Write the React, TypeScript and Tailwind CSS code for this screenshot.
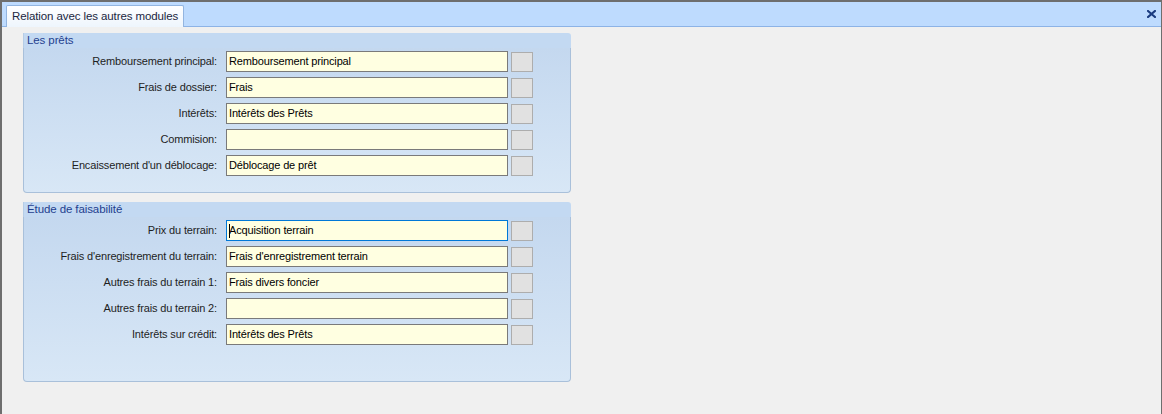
import React from "react";

const font = { fontFamily: '"Liberation Sans", Arial, sans-serif' };

type Row = { label: string; value: string; focused?: boolean };

const prets: Row[] = [
  { label: "Remboursement principal:", value: "Remboursement principal" },
  { label: "Frais de dossier:", value: "Frais" },
  { label: "Intérêts:", value: "Intérêts des Prêts" },
  { label: "Commision:", value: "" },
  { label: "Encaissement d'un déblocage:", value: "Déblocage de prêt" },
];

const etude: Row[] = [
  { label: "Prix du terrain:", value: "Acquisition terrain", focused: true },
  { label: "Frais d'enregistrement du terrain:", value: "Frais d'enregistrement terrain" },
  { label: "Autres frais du terrain 1:", value: "Frais divers foncier" },
  { label: "Autres frais du terrain 2:", value: "" },
  { label: "Intérêts sur crédit:", value: "Intérêts des Prêts" },
];

function FieldRow({ row }: { row: Row }) {
  return (
    <div className="flex h-[26px] items-center pt-[1px]">
      <div className="w-[193px] shrink-0 text-right text-[11px] tracking-[-0.15px] text-[#1e1e1e] leading-none">
        {row.label}
      </div>
      <div
        className={
          "ml-[9px] flex h-[21px] w-[282px] items-center bg-[#ffffe1] pl-[2px] text-[11px] tracking-[-0.15px] text-black leading-none " +
          (row.focused ? "border border-[#0078d7]" : "border border-[#7a7a7a]")
        }
      >
        {row.focused && <span className="mr-[-1px] inline-block h-[14px] w-px bg-black" />}
        {row.value}
      </div>
      <div className="ml-[3px] h-[20px] w-[22px] border border-[#adadad] bg-[#e1e1e1]" />
    </div>
  );
}

function Group({ title, rows, bottom }: { title: string; rows: Row[]; bottom: string }) {
  return (
    <div className="w-[548px]">
      <div className="h-[15px] rounded-tr-[3px] border-l border-[#b6cde6] bg-[#c3d9f2] pl-[3px] text-[11.5px] leading-[15px] tracking-[-0.1px] text-[#1f3f8f]">
        {title}
      </div>
      <div
        className={
          "rounded-b-[4px] border-b border-l border-r border-[#a9c0da] bg-gradient-to-b from-[#c4d8ef] to-[#d8e7f6] " +
          bottom
        }
      >
        {rows.map((r) => (
          <FieldRow key={r.label} row={r} />
        ))}
      </div>
    </div>
  );
}

export default function App() {
  return (
    <div
      style={font}
      className="flex h-[414px] w-[1162px] flex-col overflow-hidden border-l-2 border-r border-t-2 border-[#6e6e6e] bg-[#f0f0f0]"
    >
      <div className="relative flex h-[25px] shrink-0 items-end border-b border-[#8db3e6] bg-[#bedbfe] pl-[4px]">
        <div className="mb-[-1px] flex h-[22px] items-center rounded-t-[2px] border border-b-0 border-[#93b5e0] bg-gradient-to-b from-white to-[#eef5fd] px-[5px] text-[11.5px] tracking-[-0.1px] text-[#1b2640]">
          Relation avec les autres modules
        </div>
        <svg
          className="absolute right-[5px] top-[8px]"
          width="9"
          height="8"
          viewBox="0 0 9 8"
        >
          <path d="M1 1 L8 7 M8 1 L1 7" stroke="#1b3c80" strokeWidth="2.2" strokeLinecap="square" />
        </svg>
      </div>
      <div className="flex flex-col gap-[9px] pl-[21px] pt-[6px]">
        <Group title="Les prêts" rows={prets} bottom="pb-[14px]" />
        <Group title="Étude de faisabilité" rows={etude} bottom="pb-[34px]" />
      </div>
    </div>
  );
}
